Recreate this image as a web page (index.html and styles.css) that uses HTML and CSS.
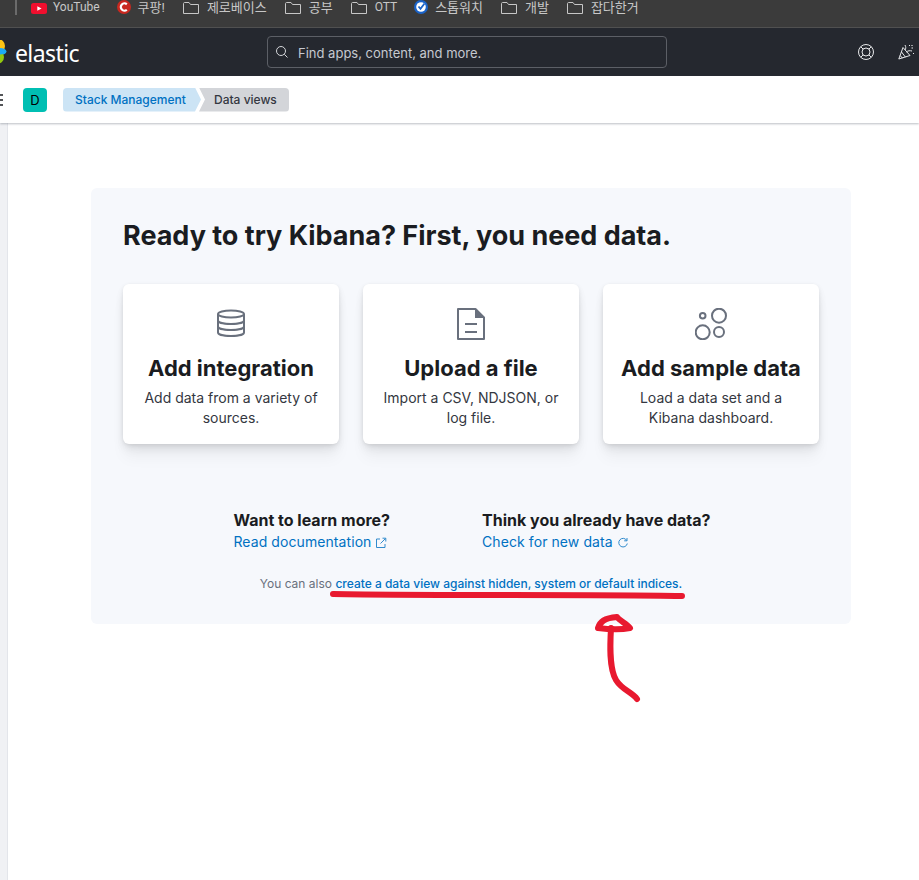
FILE: index.html
```html
<!DOCTYPE html>
<html lang="ko">
<head>
<meta charset="utf-8">
<title>Data views - Elastic</title>
<link rel="stylesheet" href="styles.css">
</head>
<body>
<nav class="bookmarks">
  <span class="sep"></span>
  <a class="bm bm-yt"><svg class="fav" viewBox="0 0 16 12"><rect x="0" y="1" width="16" height="11" rx="2.5" fill="#f00f2e"/><path d="M6.3 4.2 10.6 6.5 6.3 8.8Z" fill="#fff"/></svg>YouTube</a>
  <a class="bm bm-c ko"><svg class="fav-c" viewBox="0 0 14 14"><circle cx="7" cy="7" r="7" fill="#c9281f"/><path d="M9.8 4.3A3.6 3.6 0 1 0 9.8 9.7" fill="none" stroke="#fff" stroke-width="2.2"/></svg>쿠팡!</a>
  <a class="bm ko"><svg class="folder" viewBox="0 0 16 12"><path d="M.5 11.5V1.5C.5 1 1 .5 1.500 .5H6L7.500 2.500H15.500V11.500Z" fill="none" stroke="#c7c7c7"/></svg>제로베이스</a>
  <a class="bm ko"><svg class="folder" viewBox="0 0 16 12"><path d="M.5 11.5V1.5C.5 1 1 .5 1.500 .5H6L7.500 2.500H15.500V11.500Z" fill="none" stroke="#c7c7c7"/></svg>공부</a>
  <a class="bm bm-ott"><svg class="folder" viewBox="0 0 16 12"><path d="M.5 11.5V1.5C.5 1 1 .5 1.500 .5H6L7.500 2.500H15.500V11.500Z" fill="none" stroke="#c7c7c7"/></svg>OTT</a>
  <a class="bm bm-c ko"><svg class="fav-c" viewBox="0 0 14 14"><circle cx="7" cy="7" r="7" fill="#1a63c8"/><circle cx="7" cy="7" r="4.800" fill="#fff"/><path d="M4.500 6.500 6.500 8.800 10.500 3.500" fill="none" stroke="#1a63c8" stroke-width="1.800"/></svg>스톱워치</a>
  <a class="bm ko"><svg class="folder" viewBox="0 0 16 12"><path d="M.5 11.5V1.5C.5 1 1 .5 1.500 .5H6L7.500 2.500H15.500V11.500Z" fill="none" stroke="#c7c7c7"/></svg>개발</a>
  <a class="bm ko"><svg class="folder" viewBox="0 0 16 12"><path d="M.5 11.5V1.5C.5 1 1 .5 1.500 .5H6L7.500 2.500H15.500V11.500Z" fill="none" stroke="#c7c7c7"/></svg>잡다한거</a>
</nav>

<header class="topbar">
  <svg class="logo" viewBox="0 0 7 24"><circle cx="-2" cy="6" r="7" fill="#fec514"/><ellipse cx="0" cy="11.500" rx="6.500" ry="3.500" fill="#1ba9f5"/><circle cx="-3" cy="17" r="7" fill="#93c90e"/><ellipse cx="0" cy="12" rx="6" ry="2.500" fill="#1ba9f5"/></svg>
  <span class="wordmark">elastic</span>
  <div class="search">
    <svg class="search-icon" viewBox="0 0 14 14"><circle cx="6" cy="6" r="4.500" fill="none" stroke="#d4d6da"/><path d="M9.300 9.300 12.500 12.500" stroke="#d4d6da"/></svg>
    <span class="search-text">Find apps, content, and more.</span>
  </div>
  <div class="top-actions">
    <svg class="top-icon" viewBox="0 0 16 16" fill="none" stroke="#e8e9eb"><circle cx="8" cy="8" r="7.500"/><circle cx="8" cy="8" r="4"/><path d="M2.700 2.700 5.200 5.200M13.300 2.700 10.800 5.200M2.700 13.300 5.200 10.800M13.300 13.300 10.800 10.800"/></svg>
    <svg class="top-icon" viewBox="0 0 16 16" fill="none" stroke="#e8e9eb"><path d="M5 3.500.8 15 12 11.500Z"/><path d="M3.500 8 7.500 13.200M2.200 11.500 4.500 14.200"/><path d="M7 6C8 4.500 8 3 7 1M8.500 8C10 6.500 12 6.500 14 7" /><path d="M11 1.500h1M14 1v1M13.500 4h1.500M15 9.500h1" stroke-width="1.200"/></svg>
  </div>
</header>

<div class="subbar">
  <svg class="menu" viewBox="0 0 3 12"><path d="M0 1H3M0 6H3M0 11H3" stroke="#1a1c21" stroke-width="1.500"/></svg>
  <span class="avatar">D</span>
  <ol class="crumbs">
    <li class="crumb crumb-link">Stack Management</li>
    <li class="crumb crumb-current">Data views</li>
  </ol>
</div>

<div class="app">
  <aside class="sidenav"></aside>
  <main class="main">
    <section class="panel">
      <h1 class="title">Ready to try Kibana? First, you need data.</h1>
      <div class="cards">
        <article class="card">
          <svg class="card-icon" viewBox="0 0 32 32" fill="none" stroke="#69707d" stroke-width="2"><ellipse cx="16" cy="6" rx="13" ry="3.500"/><path d="M3 6V24.500C3 26.500 9 28 16 28S29 26.500 29 24.500V6"/><path d="M3 12.500C3 14.500 9 16 16 16S29 14.500 29 12.500M3 18.500C3 20.500 9 22 16 22S29 20.500 29 18.500"/></svg>
          <h2 class="card-title">Add integration</h2>
          <p class="card-text">Add data from a variety of sources.</p>
        </article>
        <article class="card">
          <svg class="card-icon" viewBox="0 0 32 32" fill="none" stroke="#69707d" stroke-width="2"><path d="M3 1H20.500L29 9.500V31H3Z" stroke-linejoin="round"/><path d="M20 1 29.500 10H20Z" fill="#69707d" stroke="none"/><path d="M10 16H22M10 24H22"/></svg>
          <h2 class="card-title">Upload a file</h2>
          <p class="card-text">Import a CSV, NDJSON, or log file.</p>
        </article>
        <article class="card">
          <svg class="card-icon" viewBox="0 0 32 32" fill="none" stroke="#69707d" stroke-width="2"><circle cx="7.700" cy="7.700" r="2.800"/><circle cx="24" cy="7.700" r="7"/><circle cx="7.700" cy="24.300" r="7"/><circle cx="24" cy="24" r="5"/></svg>
          <h2 class="card-title">Add sample data</h2>
          <p class="card-text">Load a data set and a Kibana dashboard.</p>
        </article>
      </div>
      <div class="more">
        <div class="more-col">
          <h3 class="more-title">Want to learn more?</h3>
          <a class="more-link">Read documentation<svg class="link-icon" viewBox="0 0 12 12" fill="none" stroke="#0071c2"><path d="M5 2H1.500V10.500H10V7"/><path d="M5.500 6.500 10.500 1.500M7.500 1.200H10.800V4.500"/></svg></a>
        </div>
        <div class="more-col">
          <h3 class="more-title">Think you already have data?</h3>
          <a class="more-link">Check for new data<svg class="link-icon" viewBox="0 0 12 12" fill="none" stroke="#0071c2"><path d="M9.800 3.500A4.300 4.300 0 1 0 10.300 6.500"/><path d="M10 1V3.800H7.200"/></svg></a>
        </div>
      </div>
      <p class="also">You can also <a class="also-link">create a data view against hidden, system or default indices.</a></p>
    </section>
  </main>
</div>

<svg class="markup" viewBox="0 0 919 880" fill="none" stroke="#e8192f" stroke-width="6" stroke-linecap="round" stroke-linejoin="round">
  <path d="M333 594C440 596 580 594 682 596"/>
  <path d="M637 699C632 692 622 690 616 680C609 668 610 645 611 628"/>
  <path d="M598 628C600 622 604 618 617 617C620 621 627 624 630 628C620 630 606 629 598 628Z"/>
</svg>
</body>
</html>
```
FILE: styles.css
```css
* { box-sizing: border-box; }
html, body { margin: 0; padding: 0; }
body {
  position: relative;
  width: 919px;
  height: 880px;
  overflow: hidden;
  background: #fff;
  font-family: Inter, "Noto Sans CJK KR", sans-serif;
  color: #1a1c21;
}

/* browser bookmarks */
.bookmarks {
  display: flex;
  align-items: center;
  height: 28px;
  padding: 0 0 13px 15px;
  background: #3b3b3b;
  border-bottom: 1px solid #505050;
  font-family: Roboto, "Noto Sans CJK KR", sans-serif;
  font-size: 12px;
  line-height: 13px;
  color: #c7c7c7;
  white-space: nowrap;
}
.sep { width: 2px; height: 16px; margin-right: 14px; background: #6b6b6b; flex: none; }
.bm { display: flex; align-items: center; gap: 8px; margin-right: 18px; }
.bm-yt { gap: 6px; margin-right: 17px; }
.bm-ott { margin-right: 17px; }
.bm-c { gap: 7px; }
.ko { font-size: 13px; }
.fav, .folder { width: 16px; height: 12px; flex: none; margin-top: 1px; }
.fav-c { width: 14px; height: 14px; flex: none; }

/* kibana header */
.topbar {
  display: flex;
  align-items: center;
  height: 48px;
  background: #25282f;
}
.logo { width: 7px; height: 24px; flex: none; }
.wordmark {
  margin: 2px 0 0 8px;
  width: 252px;
  font-family: "Noto Sans", sans-serif;
  font-size: 23px;
  color: #fff;
  letter-spacing: -.6px;
}
.search {
  display: flex;
  align-items: center;
  gap: 9px;
  width: 400px;
  height: 32px;
  padding-left: 7px;
  border: 1px solid #5c5f66;
  border-radius: 4px;
  font-size: 13px;
  color: #c6c9cf;
}
.search-text { padding-top: 2px; }
.search-icon { width: 14px; height: 14px; flex: none; }
.top-actions { display: flex; gap: 24px; margin-left: 191px; }
.top-icon { width: 16px; height: 16px; flex: none; }

/* breadcrumbs bar */
.subbar {
  position: relative;
  display: flex;
  align-items: center;
  height: 47px;
  background: #fff;
  box-shadow: 0 1px 2px rgba(105, 112, 125, .45);
}
.menu { width: 3px; height: 12px; flex: none; }
.avatar {
  display: flex;
  align-items: center;
  justify-content: center;
  width: 24px;
  height: 24px;
  margin-left: 20px;
  border-radius: 4px;
  background: #00bfb3;
  font-size: 13px;
  color: #000;
}
.crumbs { display: flex; margin: 0 0 0 16px; padding: 0; list-style: none; font-size: 12px; font-weight: 500; }
.crumb { display: flex; align-items: center; height: 24px; }
.crumb-link {
  width: 138px;
  padding-left: 12px;
  border-radius: 4px 0 0 4px;
  background: #cce4f5;
  color: #0071c2;
  clip-path: polygon(0 0, calc(100% - 6px) 0, 100% 50%, calc(100% - 6px) 100%, 0 100%);
}
.crumb-current {
  width: 90px;
  margin-left: -2px;
  padding-left: 15px;
  border-radius: 0 4px 4px 0;
  background: #d3d5d9;
  color: #343741;
  clip-path: polygon(0 0, 100% 0, 100% 100%, 0 100%, 6px 50%);
}

/* page */
.app { display: flex; height: 757px; }
.sidenav { width: 8px; flex: none; background: #f0f1f4; border-right: 1px solid #e3e5ea; }
.main { flex: 1; padding: 65px 0 0 83px; }
.panel {
  width: 760px;
  padding: 32px 32px 31px;
  border-radius: 6px;
  background: #f6f8fc;
}
.title { margin: 0 0 32px; font-size: 27px; line-height: 32px; font-weight: 700; letter-spacing: -.02px; color: #1a1c21; white-space: nowrap; }
.cards { display: grid; grid-template-columns: repeat(3, 216px); gap: 24px; }
.card {
  height: 160px;
  padding: 24px 16px 16px;
  border-radius: 6px;
  background: #fff;
  text-align: center;
  box-shadow: 0 1px 4px -1px rgba(0, 0, 0, .1), 0 3px 8px -1px rgba(0, 0, 0, .07), 0 6px 12px -1px rgba(0, 0, 0, .06), 0 15px 15px -1px rgba(0, 0, 0, .04);
}
.card-icon { display: block; width: 32px; height: 32px; margin: 0 auto 14px; }
.card-title { margin: 0 0 6px; font-size: 22px; line-height: 28px; font-weight: 700; color: #1a1c21; white-space: nowrap; }
.card-text { margin: 0; font-size: 14px; line-height: 20px; color: #343741; }
.more { display: flex; justify-content: center; gap: 92px; margin: 66px 0 0 2px; }
.more-title { margin: 0 0 2px; font-size: 16px; line-height: 20px; font-weight: 700; color: #1a1c21; }
.more-link { display: flex; align-items: center; gap: 4px; font-size: 14px; line-height: 20px; letter-spacing: .08px; color: #0071c2; }
.link-icon { width: 12px; height: 12px; flex: none; margin-top: 1px; opacity: .8; }
.also { margin: 23px 0 0; text-align: center; font-size: 12px; line-height: 18px; color: #69707d; }
.also-link { color: #0071c2; font-weight: 500; }

/* hand-drawn annotation lying over the screenshot */
.markup { position: absolute; left: 0; top: 0; width: 919px; height: 880px; pointer-events: none; }
```
